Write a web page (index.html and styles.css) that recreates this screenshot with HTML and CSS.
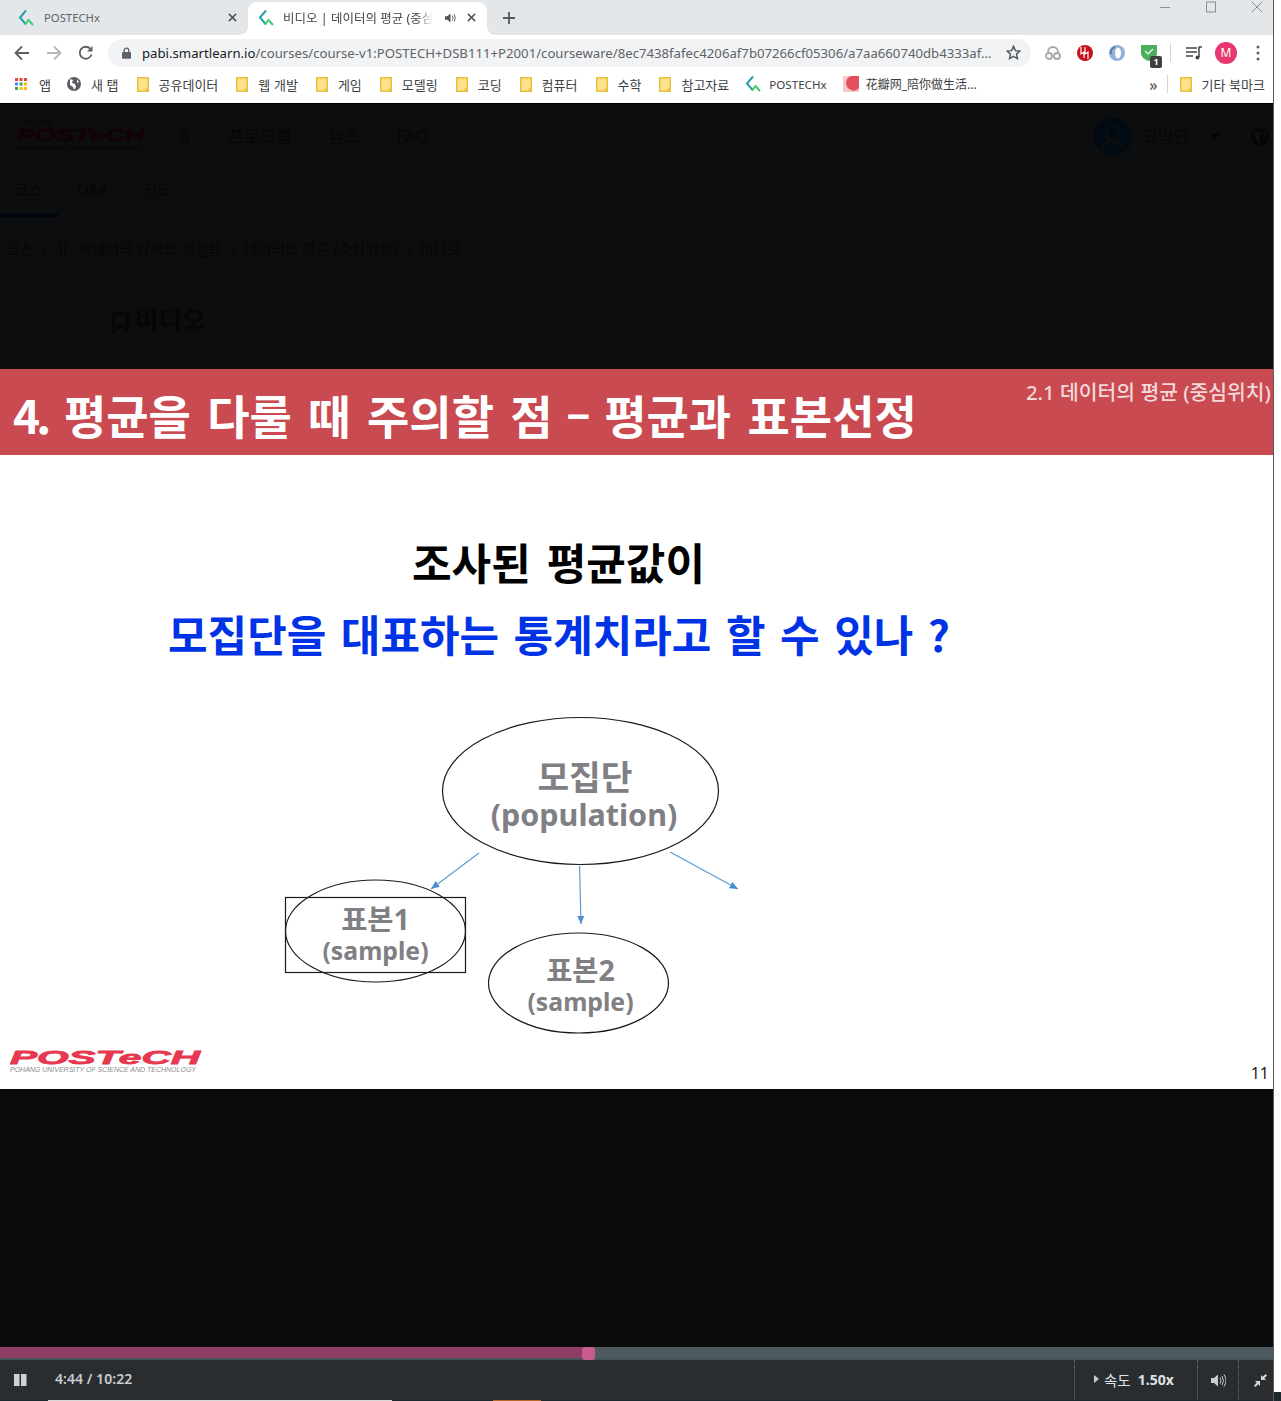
FILE: index.html
```html
<!DOCTYPE html>
<html lang="ko">
<head>
<meta charset="utf-8">
<title>비디오 | 데이터의 평균</title>
<link rel="stylesheet" href="styles.css">
</head>
<body>
<div class="screen">
  <div class="browser">
    <div class="tabstrip">
      <div class="tab">
        <svg class="favicon" viewBox="0 0 18 18"><use href="#fav"/></svg>
        <span class="tab-title">POSTECHx</span>
        <svg class="tab-x" viewBox="0 0 10 10"><path d="M1 1l8 8M9 1l-8 8"/></svg>
      </div>
      <div class="tab tab-active">
        <svg class="favicon" viewBox="0 0 18 18">
          <g id="fav" fill="none" stroke-width="2"><path d="M8 1.500L2 8.500l6 7" stroke="#2a9dab"/><path d="M7 15.500l3.500-4.500 4.500 5" stroke="#3ad06f"/></g>
        </svg>
        <span class="tab-title tab-title-clip">비디오 | 데이터의 평균 (중심위치)</span>
        <svg class="tab-audio" viewBox="0 0 12 10"><path d="M0 3h2.500L6 0v10L2.500 7H0z"/><path class="audio-wave" d="M8 2.500q1.500 2.500 0 5M10 1q2.500 4 0 8"/></svg>
        <svg class="tab-x" viewBox="0 0 10 10"><path d="M1 1l8 8M9 1l-8 8"/></svg>
      </div>
      <svg class="new-tab" viewBox="0 0 12 12"><path d="M6 0v12M0 6h12"/></svg>
      <div class="window-buttons">
        <svg class="win" viewBox="0 0 12 12"><path d="M1 6.500h10"/></svg>
        <svg class="win" viewBox="0 0 12 12"><rect x="1.500" y="1" width="9" height="10"/></svg>
        <svg class="win" viewBox="0 0 12 12"><path d="M.5.500l11 11M11.500.500l-11 11"/></svg>
      </div>
    </div>

    <div class="toolbar">
      <svg class="nav-icon" viewBox="0 0 16 16"><path d="M15 8H2M8 1.500L1.500 8 8 14.500"/></svg>
      <svg class="nav-icon nav-off" viewBox="0 0 16 16"><path d="M1 8h13M8 1.500L14.500 8 8 14.500"/></svg>
      <svg class="nav-icon" viewBox="0 0 16 16"><path d="M13.500 9.500A6 6 0 1 1 12.200 3.700"/><path class="solid" d="M14.500 1v5.500H9z"/></svg>
      <div class="omnibox">
        <svg class="lock" viewBox="0 0 10 13"><path d="M1 5.500h8a1 1 0 0 1 1 1V12a1 1 0 0 1-1 1H1a1 1 0 0 1-1-1V6.500a1 1 0 0 1 1-1z"/><path class="lock-bow" d="M2.500 5.500V3.500a2.500 2.500 0 0 1 5 0v2"/></svg>
        <span class="url"><b>pabi.smartlearn.io</b>/courses/course-v1:POSTECH+DSB111+P2001/courseware/8ec7438fafec4206af7b07266cf05306/a7aa660740db4333af...</span>
        <svg class="star" viewBox="0 0 16 16"><path d="M8 1.500l2 4.500 4.800.5-3.600 3.200 1 4.800L8 12.100l-4.200 2.400 1-4.800L1.200 6.500 6 6z"/></svg>
      </div>
      <div class="extensions">
        <svg class="ext" viewBox="0 0 18 18"><g fill="none" stroke="#a4a7ab" stroke-width="1.800"><circle cx="5" cy="12" r="3"/><circle cx="13" cy="12" r="3"/><path d="M4 8a5 5 0 0 1 10 0"/></g></svg>
        <svg class="ext" viewBox="0 0 18 18"><circle cx="9" cy="9" r="8" fill="#c8101a"/><path d="M5 3v7l3-2v6M9 3v7l3-2v7" fill="none" stroke="#fff" stroke-width="1.200"/></svg>
        <svg class="ext" viewBox="0 0 18 18"><circle cx="9" cy="9" r="8" fill="#8fb2d6"/><ellipse cx="10" cy="9" rx="3" ry="5.500" fill="#fff"/><path d="M3 10a6 6 0 0 1 4-7" stroke="#4a6f96" stroke-width="1.500" fill="none"/></svg>
        <span class="ext-badged">
          <svg class="ext" viewBox="0 0 18 18"><path d="M1 1h16v8c0 4-4 7-8 8-4-1-8-4-8-8z" fill="#4bae5b"/><path d="M5 7l3 3 5-5" fill="none" stroke="#d8f0dc" stroke-width="1.500"/></svg>
          <span class="badge">1</span>
        </span>
        <span class="toolbar-sep"></span>
        <svg class="ext" viewBox="0 0 18 18"><path d="M1 4h11M1 8h11M1 12h7" stroke="#444" stroke-width="1.500" fill="none"/><path d="M13.500 3h3.500M14 3v10" stroke="#444" stroke-width="1.500" fill="none"/><circle cx="12.500" cy="13.500" r="2" fill="#444"/></svg>
        <span class="profile">M</span>
        <svg class="menu-dots" viewBox="0 0 4 16"><circle cx="2" cy="2" r="1.500"/><circle cx="2" cy="8" r="1.500"/><circle cx="2" cy="14" r="1.500"/></svg>
      </div>
    </div>

    <div class="bookmarks">
      <span class="bm bm-apps">
        <svg class="apps" viewBox="0 0 12 12">
          <rect width="3" height="3" fill="#e8453c"/><rect x="4.500" width="3" height="3" fill="#e8453c"/><rect x="9" width="3" height="3" fill="#e8453c"/>
          <rect y="4.500" width="3" height="3" fill="#4285f4"/><rect x="4.500" y="4.500" width="3" height="3" fill="#34a853"/><rect x="9" y="4.500" width="3" height="3" fill="#fbbc05"/>
          <rect y="9" width="3" height="3" fill="#34a853"/><rect x="4.500" y="9" width="3" height="3" fill="#fbbc05"/><rect x="9" y="9" width="3" height="3" fill="#fbbc05"/>
        </svg>앱</span>
      <span class="bm">
        <svg class="globe" viewBox="0 0 14 14"><circle cx="7" cy="7" r="7" fill="#5a5e63"/><path d="M3 2l3 1-1 3 3 1 1 3-2 3-1-3-3-2zM10 2l2 3-2 1z" fill="#fff"/></svg>새 탭</span>
      <span class="bm"><svg class="folder"><use href="#folder"/></svg>공유데이터</span>
      <span class="bm"><svg class="folder"><use href="#folder"/></svg>웹 개발</span>
      <span class="bm"><svg class="folder"><use href="#folder"/></svg>게임</span>
      <span class="bm"><svg class="folder"><use href="#folder"/></svg>모델링</span>
      <span class="bm"><svg class="folder"><use href="#folder"/></svg>코딩</span>
      <span class="bm"><svg class="folder"><use href="#folder"/></svg>컴퓨터</span>
      <span class="bm"><svg class="folder"><use href="#folder"/></svg>수학</span>
      <span class="bm"><svg class="folder"><use href="#folder"/></svg>참고자료</span>
      <span class="bm bm-tight"><svg class="favicon" viewBox="0 0 18 18"><use href="#fav"/></svg>POSTECHx</span>
      <span class="bm bm-tight bm-cn">
        <svg class="flower" viewBox="0 0 16 16"><rect width="16" height="16" fill="#f4c9c9"/><path d="M8 0h8v12q-3 4-8 2-5-2-5-7 0-5 5-7z" fill="#e4505c"/></svg>花瓣网_陪你做生活...</span>
      <span class="bm-end">
        <span class="chevrons">»</span>
        <span class="bm-sep"></span>
        <span class="bm"><svg class="folder"><use href="#folder"/></svg>기타 북마크</span>
      </span>
    </div>

    <svg class="defs" aria-hidden="true"><defs>
      <g id="folder"><path d="M.75.750h7l3.500 0v13.500H.75z" fill="#ffe38b" stroke="#e8bf3f" stroke-width="1.500"/><path d="M8.500 11.500h3v3h-3z" fill="#e8bf3f"/></g>
    </defs></svg>

    <div class="page-dim">
      <header class="site-header">
        <div class="site-logo">
          <svg class="site-logo-art" viewBox="0 0 130 38">
            <text class="site-logo-top" x="4" y="7">기계공학부</text>
            <text class="site-logo-word" x="0" y="23" textLength="127" lengthAdjust="spacingAndGlyphs">POSTeCH</text>
            <text class="site-logo-sub" x="0" y="32" textLength="124" lengthAdjust="spacingAndGlyphs">POHANG UNIVERSITY OF SCIENCE AND TECHNOLOGY</text>
          </svg>
        </div>
        <nav class="site-nav"><span>홈</span><span>프로그램</span><span>뉴스</span><span>FAQ</span></nav>
        <div class="site-user">
          <svg class="avatar" viewBox="0 0 38 38"><circle cx="19" cy="19" r="19" fill="#010a12"/><circle cx="19" cy="16" r="7" fill="none" stroke="#0d0e0f" stroke-width="2.500"/><path d="M7 33q3-9 12-9t12 9" fill="none" stroke="#0d0e0f" stroke-width="2.500"/></svg>
          <span class="user-name">고명인</span>
          <span class="user-caret"></span>
          <svg class="user-globe" viewBox="0 0 18 18"><circle cx="9" cy="9" r="9" fill="#050606"/><path d="M3 5l5-2 3 3-3 3 2 5-3 1-3-6zM13 3l3 4-3 2z" fill="#0f1011"/></svg>
        </div>
      </header>
      <nav class="course-tabs"><span class="course-tab course-tab-on">코스</span><span class="course-tab">Q&amp;A</span><span class="course-tab">진도</span></nav>
      <div class="crumbs"><span>코스</span><i>›</i><span>Ⅱ. 빅데이터 탐색의 첫걸음</span><i>›</i><span>데이터의 평균 (중심위치)</span><i>›</i><span>비디오</span></div>
      <div class="unit">
        <svg class="unit-mark" viewBox="0 0 16 20"><path d="M1.500 1.500h13v17L8 13.500l-6.500 5z"/></svg>
        <h1 class="unit-title">비디오</h1>
      </div>
    </div>

    <section class="slide">
      <div class="slide-banner">
        <h2 class="slide-title"><span class="slide-no">4.</span> 평균을 다룰 때 주의할 점 <span class="slide-dash">–</span> 평균과 표본선정</h2>
        <span class="slide-section">2.1 데이터의 평균 (중심위치)</span>
      </div>
      <p class="slide-q">조사된 평균값이</p>
      <p class="slide-q slide-q-blue">모집단을 대표하는 통계치라고 할 수 있나 ?</p>
      <svg class="diagram" viewBox="280 710 470 330">
        <defs><marker id="arrow" markerWidth="8" markerHeight="8" refX="7" refY="3" orient="auto"><path d="M0 0L7 3 0 6z" fill="#4a8fd0"/></marker></defs>
        <ellipse class="oval" cx="580.500" cy="791" rx="138" ry="73.500"/>
        <ellipse class="oval" cx="375.500" cy="931" rx="90" ry="51"/>
        <rect class="oval" x="285.500" y="897.500" width="180" height="75"/>
        <ellipse class="oval" cx="578.500" cy="983" rx="90" ry="50"/>
        <path class="arrow" marker-end="url(#arrow)" d="M479 853L431 889"/>
        <path class="arrow" marker-end="url(#arrow)" d="M579.500 866L581 924"/>
        <path class="arrow" marker-end="url(#arrow)" d="M670 852L738 889"/>
        <text class="d-big-kr" x="585" y="790">모집단</text>
        <text class="d-big" x="584" y="826">(population)</text>
        <text class="d-small-kr" x="375.500" y="930">표본1</text>
        <text class="d-small" x="375.500" y="960">(sample)</text>
        <text class="d-small-kr" x="580.500" y="981">표본2</text>
        <text class="d-small" x="580.500" y="1011">(sample)</text>
      </svg>
      <div class="slide-foot">
        <svg class="slide-logo" viewBox="0 0 192 26">
          <text class="slide-logo-word" x="0" y="16" textLength="190" lengthAdjust="spacingAndGlyphs">POSTeCH</text>
          <text class="slide-logo-sub" x="0" y="24" textLength="186" lengthAdjust="spacingAndGlyphs">POHANG UNIVERSITY OF SCIENCE AND TECHNOLOGY</text>
        </svg>
        <span class="slide-num">11</span>
      </div>
    </section>

    <div class="video-gap"></div>
    <div class="progress"><div class="progress-fill"></div><div class="progress-handle"></div></div>
    <div class="controls">
      <svg class="pause" viewBox="0 0 13 12"><rect width="5.500" height="12"/><rect x="7" width="5.500" height="12"/></svg>
      <span class="time">4:44 / 10:22</span>
      <div class="ctl ctl-speed"><span class="speed-caret"></span><span class="speed-label">속도</span><b class="speed-val">1.50x</b></div>
      <div class="ctl ctl-vol"><svg class="vol" viewBox="0 0 15 13"><path d="M0 4h3l4-3.500v12L3 9H0z"/><path class="vol-wave" d="M9 3.500q2 3 0 6M11 2q3 4.500 0 9M13 .500q4 6 0 12"/></svg></div>
      <div class="ctl ctl-full"><svg class="shrink" viewBox="0 0 13 13"><path d="M13 1.500L11.500 0 8.800 2.700 7 1v5h5l-1.700-1.700zM0 11.500L1.500 13l2.700-2.700L6 12V7H1l1.700 1.700z"/></svg></div>
    </div>
    <div class="under-strip"><span class="u-white"></span><span class="u-orange"></span></div>
  </div>
  <div class="edge"><div class="edge-white"></div></div>
</div>
</body>
</html>
```

FILE: styles.css
```css
* { box-sizing: border-box; }
html, body { margin: 0; padding: 0; background: #fff; }
body { font-family: "Noto Sans", "Noto Sans CJK KR", sans-serif; }
svg { display: block; flex: none; }

.screen { display: flex; width: 1281px; height: 1401px; overflow: hidden; }
.browser { width: 1273px; flex: none; display: flex; flex-direction: column; height: 1401px; }
.edge { flex: 1; background: #1e2a30; border-left: 1px solid #5a5a5a; }
.edge-white { height: 1392px; background: #fff; }

/* tab strip */
.tabstrip { height: 35px; background: #e4e7ea; display: flex; align-items: flex-end; flex: none; }
.tab { width: 248px; height: 33px; display: flex; align-items: center; padding: 0 11px 2px 18px; font-size: 11.300px; color: #5f6368; position: relative; }
.tab .favicon { margin-right: 8px; }
.tab-active { width: 239px; background: #fff; border-radius: 9px 9px 0 0; color: #44484c; padding: 0 11px 2px 10px; }
.tab-active .favicon { margin-right: 7px; }
.tab-active::before, .tab-active::after { content: ""; position: absolute; bottom: 0; width: 8px; height: 8px; }
.tab-active::before { left: -8px; background: radial-gradient(circle at 0 0, #e4e7ea 7.500px, #fff 8px); }
.tab-active::after { right: -8px; background: radial-gradient(circle at 100% 0, #e4e7ea 7.500px, #fff 8px); }
.tab-title { flex: 1; white-space: nowrap; overflow: hidden; }
.tab-title-clip { font-size: 12.500px; margin-right: 12px; -webkit-mask-image: linear-gradient(90deg, #000 90%, transparent); mask-image: linear-gradient(90deg, #000 90%, transparent); }
.tab-audio { width: 11px; height: 10px; margin-right: 11px; fill: #555; }
.audio-wave { fill: none; stroke: #555; stroke-width: 1; }
.tab-x { width: 9px; height: 9px; fill: none; stroke: #55595d; stroke-width: 1.800; }
.favicon { width: 18px; height: 18px; overflow: visible; }
.new-tab { width: 12px; height: 12px; margin: 0 0 11px 16px; fill: none; stroke: #55595d; stroke-width: 1.800; }
.window-buttons { margin-left: auto; align-self: flex-start; display: flex; gap: 34px; padding: 1px 10px 0 0; }
.win { width: 12px; height: 12px; fill: none; stroke: #8b8e92; stroke-width: 1; }

/* toolbar */
.toolbar { height: 35px; background: #fff; display: flex; align-items: center; flex: none; padding: 0 0 0 14px; }
.nav-icon { width: 16px; height: 16px; margin-right: 16px; fill: none; stroke: #5c6064; stroke-width: 1.800; }
.nav-off { stroke: #b4b7ba; }
.nav-icon .solid { fill: #5c6064; stroke: none; }
.omnibox { margin-left: -2px; width: 923px; height: 28px; border-radius: 14px; background: #f1f3f4; display: flex; align-items: center; padding: 0 10px 0 14px; flex: none; }
.lock { width: 9px; height: 12px; fill: #5f6368; margin-right: 11px; }
.lock-bow { fill: none; stroke: #5f6368; stroke-width: 1.500; }
.url { flex: 1; font-size: 13.180px; color: #5f6368; white-space: nowrap; overflow: hidden; }
.url b { font-weight: 400; color: #202124; }
.star { width: 15px; height: 15px; fill: none; stroke: #55595d; stroke-width: 1.600; }
.extensions { display: flex; align-items: center; gap: 14px; padding-left: 13px; flex: 1; }
.ext { width: 18px; height: 18px; }
.ext-badged { position: relative; display: block; }
.badge { position: absolute; left: 10px; top: 12px; width: 12px; height: 12px; border-radius: 2px; background: #404040; color: #fff; font-size: 9px; line-height: 12px; text-align: center; font-weight: 700; }
.toolbar-sep { width: 1px; height: 19px; background: #d3d5d8; margin-left: -2px; }
.profile { width: 22px; height: 22px; border-radius: 50%; background: #e8366f; color: #fff; font-size: 12px; line-height: 22px; text-align: center; margin-left: -2px; }
.menu-dots { width: 4px; height: 16px; fill: #5c6064; margin-left: 5px; }

/* bookmarks */
.bookmarks { height: 33px; background: #fff; display: flex; align-items: center; gap: 18px; padding: 0 8px 5px 15px; font-size: 13px; color: #3c4043; flex: none; font-family: "Noto Sans CJK KR", "Noto Sans", sans-serif; }
.bm { display: flex; align-items: center; gap: 10px; white-space: nowrap; }
.bm-apps { gap: 12px; margin-right: -2px; }
.apps { width: 12px; height: 12px; }
.globe { width: 14px; height: 14px; }
.folder { width: 12px; height: 15px; }
.flower { width: 16px; height: 16px; }
.bm-tight { gap: 6px; margin-left: -2px; font-size: 11.600px; font-family: "Noto Sans", "Noto Sans CJK SC", sans-serif; }
.bm-cn { gap: 7px; font-size: 12px; }
.bm-end { margin-left: auto; display: flex; align-items: center; gap: 12px; }
.chevrons { font-size: 16px; font-weight: 700; line-height: 16px; color: #555; margin-right: -3px; }
.bm-sep { width: 1px; height: 18px; background: #d3d5d8; }
.defs { position: absolute; width: 0; height: 0; }

/* dimmed page */
.page-dim { height: 266px; flex: none; background: #0c0d0e; border-top: 1px solid #000; color: #050606; display: flex; flex-direction: column; font-family: "Noto Sans CJK KR", "Noto Sans", sans-serif; overflow: hidden; }
.site-header { height: 65px; flex: none; display: flex; align-items: center; padding: 0 4px 0 17px; }
.site-logo-art { width: 130px; height: 38px; overflow: visible; }
.site-logo-top { font-size: 6.500px; fill: #050606; font-family: "Noto Sans CJK KR", sans-serif; }
.site-logo-word { font: italic 700 17px "Liberation Sans", sans-serif; fill: #120207; stroke: #120207; stroke-width: .7px; }
.site-logo-sub { font: italic 400 5px "Liberation Sans", sans-serif; fill: #050606; }
.site-nav { display: flex; gap: 36px; margin: 0 0 2px 29px; font-size: 17.400px; }
.site-user { margin-left: auto; display: flex; align-items: center; }
.avatar { width: 38px; height: 38px; }
.user-name { font-size: 17px; margin: 0 0 2px 10px; }
.user-caret { width: 0; height: 0; border: 5px solid transparent; border-top-color: #020303; border-bottom: 0; margin-left: 21px; }
.user-globe { width: 18px; height: 18px; margin-left: 31px; }
.course-tabs { height: 48px; flex: none; display: flex; gap: 5px; font-size: 15px; }
.course-tab { padding: 9px 15px 0; border-bottom: 4px solid transparent; }
.course-tab-on { border-bottom-color: #01070c; }
.crumbs { height: 65px; flex: none; display: flex; align-items: center; gap: 9px; padding: 0 0 2px 6px; font-size: 14.700px; }
.crumbs i { font-style: normal; }
.unit { flex: 1; margin-left: 71px; border-top: 1px solid #0e0f10; border-left: 1px solid #0e0f10; display: flex; align-items: flex-start; padding: 19px 0 0 40px; gap: 6px; }
.unit-mark { width: 17px; height: 21px; margin-top: 10px; fill: none; stroke: #050606; stroke-width: 2.500; }
.unit-title { margin: 0; font-size: 25.500px; line-height: 32px; font-weight: 700; }

/* slide */
.slide { height: 720px; flex: none; background: #fff; display: flex; flex-direction: column; }
.slide-banner { height: 86px; flex: none; background: #c94a50; display: flex; justify-content: space-between; align-items: flex-start; padding: 0 2px 0 13px; }
.slide-title { margin: 16px 0 0; font-size: 46px; line-height: 58px; font-weight: 700; color: #fff; white-space: nowrap; word-spacing: 3.500px; font-family: "Noto Sans CJK KR", sans-serif; }
.slide-no { letter-spacing: -3.800px; }
.slide-dash { margin: 0 -3px; }
.slide-section { margin-top: 9px; font-size: 20.400px; line-height: 28px; font-weight: 500; color: #f2d8d8; white-space: nowrap; }
.slide-q { margin: 78px 156px 0 0; text-align: center; font-size: 43px; line-height: 56px; font-weight: 700; color: #000; font-family: "Noto Sans CJK KR", sans-serif; word-spacing: 4px; }
.slide-q-blue { margin: 16px 155px 0 0; word-spacing: 2.500px; color: #0033e6; }
.diagram { width: 470px; height: 330px; margin: 49px 0 0 280px; }
.oval { fill: none; stroke: #1a1a1a; stroke-width: 1.200; }
.arrow { fill: none; stroke: #5b9bd5; stroke-width: 1.200; }
.d-big { font-size: 30.500px; font-weight: 700; fill: #808084; text-anchor: middle; }
.d-big-kr { font-size: 34.500px; font-weight: 700; fill: #808084; text-anchor: middle; }
.d-small { font-size: 24.800px; font-weight: 700; fill: #808084; text-anchor: middle; }
.d-small-kr { font-size: 28.500px; font-weight: 700; fill: #808084; text-anchor: middle; }
.slide-foot { flex: 1; display: flex; justify-content: space-between; align-items: flex-end; padding: 0 4px 5px 10px; }
.slide-logo { width: 192px; height: 26px; margin-bottom: 10px; overflow: visible; }
.slide-logo-word { font: italic 700 19px "Liberation Sans", sans-serif; fill: #e63950; stroke: #e63950; stroke-width: .8px; }
.slide-logo-sub { font: italic 400 6.500px "Liberation Sans", sans-serif; fill: #8c8c90; }
.slide-num { font-size: 16px; line-height: 22px; color: #222; }

/* video chrome */
.video-gap { height: 258px; flex: none; background: #0a0b0b; }
.progress { height: 13px; flex: none; background: #4f5a61; border-bottom: 2px solid #46555a; position: relative; }
.progress-fill { width: 583px; height: 11px; background: #8f3f66; }
.progress-handle { position: absolute; left: 582px; top: 0; width: 13px; height: 13px; border-radius: 3px; background: #c85b8f; }
.controls { height: 40px; flex: none; background: #292d30; display: flex; align-items: stretch; }
.pause { width: 13px; height: 12px; fill: #ced2d4; margin: 14px 0 0 14px; }
.time { margin: 9px 0 0 28px; font-size: 14px; line-height: 20px; font-weight: 600; color: #c9cdd0; letter-spacing: .05px; }
.ctl { border-left: 1px dotted #6a6f72; display: flex; align-items: center; color: #dfe2e4; }
.ctl-speed { margin-left: auto; width: 123px; padding: 0 0 2px 19px; font-size: 14px; }
.speed-caret { width: 0; height: 0; border: 4px solid transparent; border-left: 5px solid #c9cdd0; border-right: 0; margin-right: 5px; }
.speed-label { font-family: "Noto Sans CJK KR", sans-serif; font-size: 14.500px; margin-right: 7px; }
.speed-val { font-weight: 700; }
.ctl-vol { width: 41px; justify-content: center; }
.vol { width: 15px; height: 13px; fill: #c9cdd0; }
.vol-wave { fill: none; stroke: #c9cdd0; stroke-width: 1; }
.ctl-full { width: 35px; padding-left: 15px; }
.shrink { width: 13px; height: 13px; fill: #d5d8da; }
.under-strip { height: 1px; flex: none; background: #1e2a30; display: flex; }
.u-white { width: 344px; margin-left: 48px; background: #d8d8d8; }
.u-orange { width: 48px; margin-left: 101px; background: #b86a2a; }
```
